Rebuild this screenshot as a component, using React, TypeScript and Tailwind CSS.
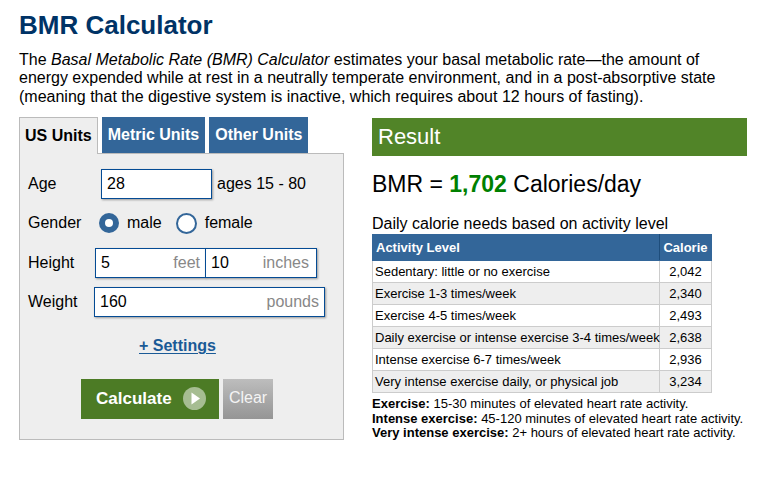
import { ReactNode } from 'react';

const rows: [string, string][] = [
  ['Sedentary: little or no exercise', '2,042'],
  ['Exercise 1-3 times/week', '2,340'],
  ['Exercise 4-5 times/week', '2,493'],
  ['Daily exercise or intense exercise 3-4 times/week', '2,638'],
  ['Intense exercise 6-7 times/week', '2,936'],
  ['Very intense exercise daily, or physical job', '3,234'],
];

function Field({ value, unit, className = '' }: { value: string; unit?: string; className?: string }) {
  return (
    <div
      className={`h-[30px] bg-white border border-[#044b94] shadow-[1px_1px_2px_#999] flex items-center justify-between pl-[5px] pr-[5px] ${className}`}
    >
      <span className="text-black">{value}</span>
      {unit && <span className="text-[#888]">{unit}</span>}
    </div>
  );
}

function Row({ label, children, className = '' }: { label: string; children: ReactNode; className?: string }) {
  return (
    <div className={`flex items-center h-[30px] ${className}`}>
      <div className="w-[66px] shrink-0">{label}</div>
      {children}
    </div>
  );
}

export default function App() {
  return (
    <div className="w-[771px] h-[477px] bg-white pl-[19px] pt-[10px] font-['Liberation_Sans',Arial,sans-serif] text-black text-[16px] leading-[1.15]">
      <h1 className="text-[26px] font-bold text-[#003366] leading-[30px]">BMR Calculator</h1>
      <p className="mt-[11px] w-[728px]">
        The <i>Basal Metabolic Rate (BMR) Calculator</i> estimates your basal metabolic rate—the amount of energy
        expended while at rest in a neutrally temperate environment, and in a post-absorptive state (meaning that
        the digestive system is inactive, which requires about 12 hours of fasting).
      </p>

      <div className="flex mt-[11px]">
        {/* Left: form */}
        <div className="w-[325px]">
          <div className="flex gap-[4px] h-[36px]">
            <div className="relative z-10 h-[37px] px-[5px] flex items-center font-bold bg-[#eeeeee] border-t border-l border-r border-[#bbbbbb]">
              US Units
            </div>
            <div className="h-[36px] px-[6px] flex items-center font-bold bg-[#336699] text-white">Metric Units</div>
            <div className="h-[36px] px-[6px] flex items-center font-bold bg-[#336699] text-white">Other Units</div>
          </div>
          <div className="bg-[#eeeeee] border border-[#bbbbbb] h-[287px] pl-[8px] pt-[15px]">
            <Row label="Age">
              <Field value="28" className="w-[111px] ml-[7px]" />
              <span className="ml-[5px]">ages 15 - 80</span>
            </Row>
            <Row label="Gender" className="mt-[9px]">
              <span className="ml-[5px] w-[20px] h-[20px] rounded-full bg-[#336699] flex items-center justify-center">
                <span className="w-[8px] h-[8px] rounded-full bg-white" />
              </span>
              <span className="ml-[8px]">male</span>
              <span className="ml-[14px] w-[21px] h-[21px] rounded-full bg-white border-[2px] border-[#336699]" />
              <span className="ml-[8px]">female</span>
            </Row>
            <Row label="Height" className="mt-[10px]">
              <Field value="5" unit="feet" className="w-[111px] ml-[1px]" />
              <Field value="10" unit="inches" className="w-[112px] -ml-px pr-[7px]" />
            </Row>
            <Row label="Weight" className="mt-[9px]">
              <Field value="160" unit="pounds" className="w-[231px] pr-[5px]" />
            </Row>
            <div className="mt-[20px] pl-[111px]">
              <span className="font-bold text-[#1a5a96] underline underline-offset-[2px]">+ Settings</span>
            </div>
            <div className="mt-[23px] flex gap-[4px] pl-[53px]">
              <div className="w-[138px] h-[40px] bg-[#4c7b25] flex items-center pl-[15px] text-white font-bold text-[17px]">
                Calculate
                <svg width="23" height="23" viewBox="0 0 23 23" className="ml-[11px]">
                  <circle cx="11.5" cy="11.5" r="11.5" fill="#ffffff" fillOpacity="0.5" />
                  <path d="M8.5 5.5 L17 11.5 L8.5 17.5 Z" fill="#ffffff" />
                </svg>
              </div>
              <div className="w-[50px] h-[40px] bg-gradient-to-b from-[#bdbdbd] to-[#959595] flex items-center justify-center text-[#f4f4f4]">
                Clear
              </div>
            </div>
          </div>
        </div>

        {/* Right: result */}
        <div className="ml-[28px] w-[375px]">
          <div className="mt-[1px] h-[38px] bg-[#518428] text-white text-[22px] pl-[6px] pb-[2px] flex items-center">
            Result
          </div>
          <div className="mt-[15px] text-[23px]">
            BMR = <b className="text-[#008000]">1,702</b> Calories/day
          </div>
          <div className="mt-[17px]">Daily calorie needs based on activity level</div>
          <table className="mt-[1px] w-[339px] table-fixed border-collapse text-[13px] leading-[15px]">
            <thead>
              <tr className="bg-[#336699] text-white font-bold h-[26px]">
                <td className="w-[287px] pl-[3px] border border-[#336699] border-r-[#1e4d7b]">Activity Level</td>
                <td className="w-[52px] text-center border border-[#336699]">Calorie</td>
              </tr>
            </thead>
            <tbody>
              {rows.map(([level, cal], i) => (
                <tr key={level} className={`h-[22px] ${i % 2 ? 'bg-[#eeeeee]' : 'bg-white'}`}>
                  <td className="pl-[2px] border border-[#cccccc] whitespace-nowrap">{level}</td>
                  <td className="text-center border border-[#cccccc]">{cal}</td>
                </tr>
              ))}
            </tbody>
          </table>
          <div className="mt-[4px] text-[13px] leading-[14.5px]">
            <div><b>Exercise:</b> 15-30 minutes of elevated heart rate activity.</div>
            <div><b>Intense exercise:</b> 45-120 minutes of elevated heart rate activity.</div>
            <div><b>Very intense exercise:</b> 2+ hours of elevated heart rate activity.</div>
          </div>
        </div>
      </div>
    </div>
  );
}
